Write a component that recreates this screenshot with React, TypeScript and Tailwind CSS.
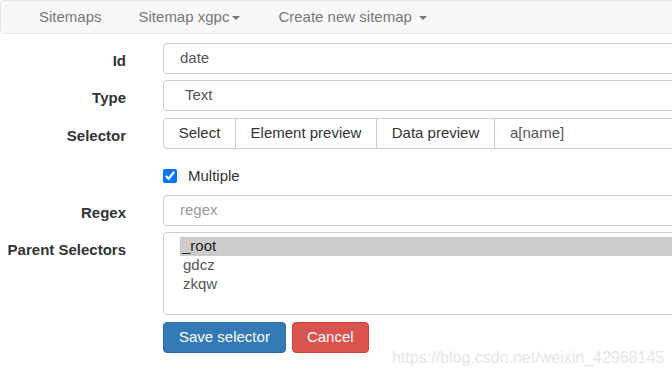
import { useState } from 'react';

const font = { fontFamily: '"Liberation Sans", Arial, sans-serif' };

function Caret() {
    return <span className="inline-block ml-[3px] align-middle border-t-[4px] border-t-[#777] border-x-[4px] border-x-transparent" />;
}

function Row({ label, children }: { label: string; children: React.ReactNode }) {
    return (
        <div className="flex items-start">
            <label className="w-[126px] shrink-0 text-right text-[15px] font-bold text-[#333] pt-[7px]">{label}</label>
            <div className="ml-[37px] flex-1">{children}</div>
        </div>
    );
}

export default function App() {
    const [multiple, setMultiple] = useState(true);
    const parents = ['_root', 'gdcz', 'zkqw'];

    return (
        <div className="relative w-[672px] h-[376px] overflow-hidden bg-white" style={font}>
            <nav className="flex items-center h-[34px] w-[700px] bg-[#f8f8f8] border border-[#e7e7e7] rounded-[4px] text-[15px] text-[#777]">
                <span className="ml-[38px]">Sitemaps</span>
                <span className="ml-[37px]">Sitemap xgpc<Caret /></span>
                <span className="ml-[38px]">Create new sitemap <Caret /></span>
            </nav>

            <div className="mt-[9px] w-[720px] flex flex-col text-[15px]">
                <Row label="Id">
                    <div className="h-[31px] border border-[#ccc] rounded-[4px] flex items-center px-[16px] text-[#555]">date</div>
                </Row>
                <div className="h-[6px]" />
                <Row label="Type">
                    <div className="h-[31px] border border-[#ccc] rounded-[4px] flex items-center px-[21px] text-[#555]">Text</div>
                </Row>
                <div className="h-[7px]" />
                <Row label="Selector">
                    <div className="h-[31px] flex text-[#333]">
                        <span className="w-[73px] flex items-center justify-center border border-[#ccc] rounded-l-[4px]">Select</span>
                        <span className="w-[141px] flex items-center justify-center border border-l-0 border-[#ccc]">Element preview</span>
                        <span className="w-[118px] flex items-center justify-center border border-l-0 border-[#ccc]">Data preview</span>
                        <span className="flex-1 flex items-center px-[15px] border border-l-0 border-[#ccc] text-[#555]">a[name]</span>
                    </div>
                </Row>
                <div className="h-[18px]" />
                <div className="ml-[163px] flex items-center h-[18px] text-[#333]">
                    <input
                        type="checkbox"
                        checked={multiple}
                        onChange={(e) => setMultiple(e.target.checked)}
                        className="w-[14px] h-[14px] m-0 accent-[#0075ff]"
                    />
                    <span className="ml-[11px]">Multiple</span>
                </div>
                <div className="h-[10px]" />
                <Row label="Regex">
                    <div className="h-[31px] border border-[#ccc] rounded-[4px] flex items-center px-[16px] text-[#999]">regex</div>
                </Row>
                <div className="h-[6px]" />
                <Row label="Parent Selectors">
                    <div className="h-[83px] border border-[#ccc] rounded-[4px] pt-[4px] pl-[16px] text-[#555] leading-[18.5px]">
                        {parents.map((p, i) => (
                            <div key={p} className={i === 0 ? 'bg-[#cccccc] text-[#222] h-[19px] pl-[2px]' : 'pl-[3px]'}>{p}</div>
                        ))}
                    </div>
                </Row>
                <div className="ml-[163px] mt-[7px] flex gap-[6px] text-white">
                    <button className="h-[31px] px-[15px] bg-[#337ab7] border border-[#2e6da4] rounded-[4px]">Save selector</button>
                    <button className="h-[31px] px-[14px] bg-[#d9534f] border border-[#d43f3a] rounded-[4px]">Cancel</button>
                </div>
            </div>

            <div className="absolute left-[392px] top-[346px] text-[16px] text-[#e6e6e6] pointer-events-none">
                https://blog.csdn.net/weixin_42968145
            </div>
        </div>
    );
}
